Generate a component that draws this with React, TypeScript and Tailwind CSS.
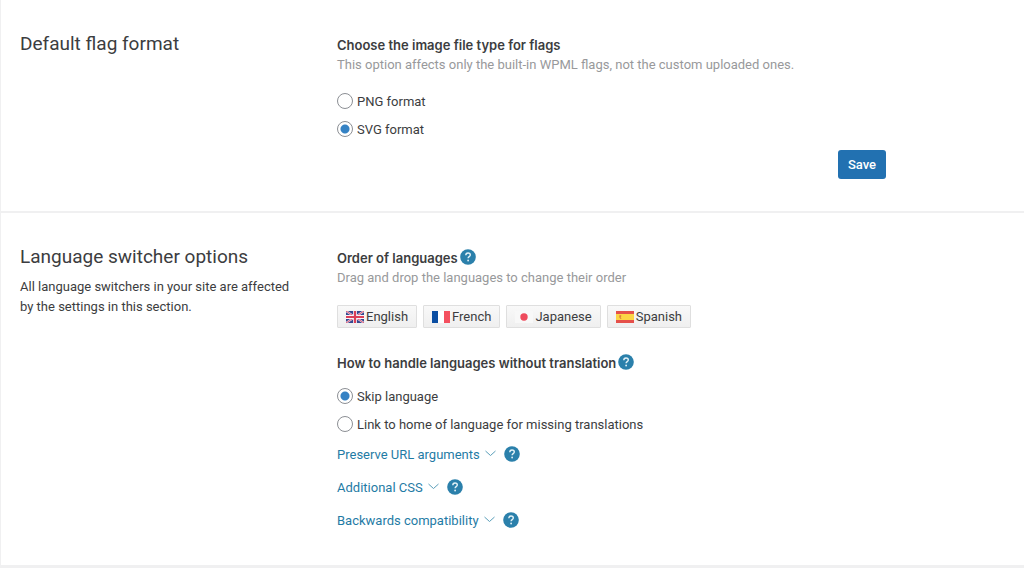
import { useState } from 'react'
import type { ReactNode } from 'react'

function FlagGB() {
  return (
    <svg viewBox="0 0 18 12" className="h-3 w-[18px]" aria-hidden="true">
      <rect width="18" height="12" fill="#35478f" />
      <path d="M0 0L18 12M18 0L0 12" stroke="#e3dced" strokeWidth="2" />
      <path d="M0 0L18 12M18 0L0 12" stroke="#dc4560" strokeWidth="0.9" />
      <path d="M9 0V12M0 6H18" stroke="#f8f5fa" strokeWidth="3.8" />
      <path d="M9 0V12M0 6H18" stroke="#dc3f58" strokeWidth="2.2" />
    </svg>
  )
}

function FlagFR() {
  return (
    <svg viewBox="0 0 18 12" className="h-3 w-[18px]" aria-hidden="true">
      <rect width="6" height="12" fill="#0b4ea2" />
      <rect x="6" width="6" height="12" fill="#fff" />
      <rect x="12" width="6" height="12" fill="#f4505f" />
    </svg>
  )
}

function FlagJP() {
  return (
    <svg viewBox="0 0 18 12" className="h-3 w-[18px]" aria-hidden="true">
      <rect width="18" height="12" fill="#f8f8f8" />
      <circle cx="9" cy="6" r="3.7" fill="#ee4a5c" />
    </svg>
  )
}

function FlagES() {
  return (
    <svg viewBox="0 0 18 12" className="h-3 w-[18px]" aria-hidden="true">
      <rect width="18" height="12" fill="#e5504a" />
      <rect y="3" width="18" height="6" fill="#fcd545" />
      <path d="M3.4 4.3h1.8v1.2l-.9.4 1.2 1.6-.8.5-1.3-1.4z" fill="#d9763a" />
    </svg>
  )
}

const languages = [
  { name: 'English', Flag: FlagGB },
  { name: 'French', Flag: FlagFR },
  { name: 'Japanese', Flag: FlagJP },
  { name: 'Spanish', Flag: FlagES },
]

function Help() {
  return (
    <button type="button" aria-label="Help" className="block size-4 shrink-0">
      <svg viewBox="0 0 16 16" className="size-4" fill="none" aria-hidden="true">
        <circle cx="8" cy="8" r="7.8" fill="#2b80ab" />
        <path
          d="M5.8 6.2C5.8 4.8 6.7 4 8 4s2.3.8 2.3 2c0 1.6-2.2 1.7-2.2 3.3"
          stroke="#e3f1f7"
          strokeWidth="1.4"
        />
        <circle cx="8.1" cy="11.5" r="0.9" fill="#e3f1f7" />
      </svg>
    </button>
  )
}

function Heading({ children }: { children: ReactNode }) {
  return <h3 className="pt-[3px] font-['Inter',sans-serif] font-semibold">{children}</h3>
}

type RadioProps = {
  name: string
  label: string
  checked: boolean
  onChange: () => void
}

function Radio({ name, label, checked, onChange }: RadioProps) {
  return (
    <label className="flex w-fit items-center gap-1">
      <input
        type="radio"
        name={name}
        checked={checked}
        onChange={onChange}
        className="size-4 shrink-0 appearance-none rounded-full border border-[#8c8f94] bg-white checked:bg-[radial-gradient(circle,#3582c4_4px,white_5px)]"
      />
      <span className="pt-0.5">{label}</span>
    </label>
  )
}

function Expander({ label }: { label: string }) {
  return (
    <div className="flex items-center gap-2">
      <a href="#" className="flex items-center gap-1 text-[#1f7ba5]">
        <span className="pt-0.5">{label}</span>
        <svg viewBox="0 0 12 12" className="size-3" fill="none" stroke="#5b9fba" aria-hidden="true">
          <path d="M1.5 3L6.5 7.5L11.5 3" />
        </svg>
      </a>
      <Help />
    </div>
  )
}

function Section({ title, text, children }: { title: string; text?: string; children: ReactNode }) {
  return (
    <section className="flex border-b-2 border-l border-[#f0f0f1] bg-white py-8 pr-5 pl-[19px]">
      <div className="w-[317px] shrink-0 pr-9">
        <h2 className="text-[19px] leading-6">{title}</h2>
        {text && <p className="mt-2 leading-5">{text}</p>}
      </div>
      <div className="max-w-[549px] flex-1">{children}</div>
    </section>
  )
}

export default function App() {
  const [format, setFormat] = useState('svg')
  const [missing, setMissing] = useState('skip')

  return (
    <main className="min-h-screen bg-[#f0f0f1] font-['Roboto',sans-serif] text-[13px] leading-5 text-[#3c3d40]">
      <Section title="Default flag format">
        <Heading>Choose the image file type for flags</Heading>
        <p className="text-[#98999b]">
          This option affects only the built-in WPML flags, not the custom uploaded ones.
        </p>
        <div className="mt-[15px] flex flex-col gap-1.5">
          <Radio name="format" label="PNG format" checked={format === 'png'} onChange={() => setFormat('png')} />
          <Radio name="format" label="SVG format" checked={format === 'svg'} onChange={() => setFormat('svg')} />
        </div>
        <div className="mt-2.5 flex justify-end">
          <button type="button" className="h-[29px] rounded-[3px] bg-[#2271b1] px-2.5 font-medium text-white">
            Save
          </button>
        </div>
      </Section>

      <Section
        title="Language switcher options"
        text="All language switchers in your site are affected by the settings in this section."
      >
        <div className="flex items-center gap-0.5">
          <Heading>Order of languages</Heading>
          <Help />
        </div>
        <p className="text-[#98999b]">Drag and drop the languages to change their order</p>
        <ul className="mt-[17px] flex gap-1.5">
          {languages.map(({ name, Flag }) => (
            <li
              key={name}
              className="flex h-[23px] cursor-move items-center gap-0.5 rounded-[1px] border border-[#dfdfdf] bg-linear-to-b from-[#f9f9f9] to-[#efefef] px-2"
            >
              <Flag />
              {name}
            </li>
          ))}
        </ul>

        <div className="mt-[22px] flex items-center gap-0.5">
          <Heading>How to handle languages without translation</Heading>
          <Help />
        </div>
        <div className="mt-3 flex flex-col gap-1.5">
          <Radio name="missing" label="Skip language" checked={missing === 'skip'} onChange={() => setMissing('skip')} />
          <Radio
            name="missing"
            label="Link to home of language for missing translations"
            checked={missing === 'home'}
            onChange={() => setMissing('home')}
          />
        </div>
        <div className="mt-2 flex flex-col gap-[11px] pb-0.5">
          <Expander label="Preserve URL arguments" />
          <Expander label="Additional CSS" />
          <Expander label="Backwards compatibility" />
        </div>
      </Section>
    </main>
  )
}
